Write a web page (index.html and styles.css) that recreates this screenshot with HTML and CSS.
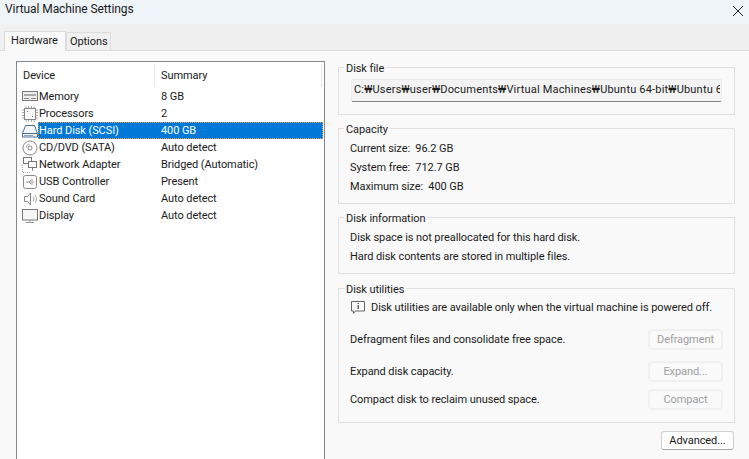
FILE: index.html
```html
<!DOCTYPE html>
<html lang="en">
<head>
<meta charset="utf-8">
<title>Virtual Machine Settings</title>
<link rel="stylesheet" href="styles.css">
</head>
<body>
<div class="window">
  <header class="titlebar">
    <span class="title">Virtual Machine Settings</span>
    <svg class="close" width="12" height="12" viewBox="0 0 12 12"><path d="M1 1l10 10M11 1L1 11" stroke="#222" fill="none"/></svg>
  </header>
  <nav class="tabs">
    <span class="tab active">Hardware</span>
    <span class="tab">Options</span>
  </nav>
  <main class="panel">
    <section class="list">
      <div class="row head"><span class="c1 headcell">Device</span><span class="c2 headcell">Summary</span></div>
      <div class="row"><svg class="ico" width="16" height="16" viewBox="0 0 16 16"><rect x="0.5" y="2.5" width="15" height="9" fill="#eee" stroke="#777"/><path d="M2 5h12v2H2z" fill="#aaa"/><path d="M2 9h5v1H2zM9 9h5v1H9z" fill="#888"/></svg><span class="c1n">Memory</span><span class="c2">8 GB</span></div>
      <div class="row"><svg class="ico" width="16" height="16" viewBox="0 0 16 16"><g fill="none" stroke="#888"><rect x="2.5" y="2.5" width="11" height="11" fill="#fafafa"/><path d="M4 0v2M6.500 0v2M9.500 0v2M12 0v2M4 14v2M6.500 14v2M9.500 14v2M12 14v2M0 4h2M0 6.500h2M0 9.500h2M0 12h2M14 4h2M14 6.500h2M14 9.500h2M14 12h2" stroke="#aaa"/></g><path d="M5 5h1v1H5zM10 10h1v1h-1z" fill="#777"/></svg><span class="c1n">Processors</span><span class="c2">2</span></div>
      <div class="row selected-row"><svg class="ico" width="16" height="16" viewBox="0 0 16 16"><g fill="none" stroke="#4a6f96"><path d="M3.500 2.500h9l3 8v3.500H.5v-3.500z" fill="#f4f8fc"/><path d="M.5 10.500h15"/></g><path d="M2 12h9v1H2z" fill="#8aa4c0"/></svg><span class="selected"><span class="c1s">Hard Disk (SCSI)</span><span class="c2">400 GB</span></span></div>
      <div class="row"><svg class="ico" width="16" height="16" viewBox="0 0 16 16"><g fill="none" stroke="#888"><circle cx="8" cy="8" r="7"/><circle cx="8" cy="8" r="2"/><path d="M4 8a4 4 0 0 1 4-4" stroke="#bbb"/></g></svg><span class="c1n">CD/DVD (SATA)</span><span class="c2">Auto detect</span></div>
      <div class="row"><svg class="ico" width="16" height="16" viewBox="0 0 16 16"><g fill="none" stroke="#777"><rect x="1.500" y="0.500" width="8" height="6"/><rect x="6.500" y="4.500" width="8" height="6" fill="#fff"/><path d="M10.500 10.500v3"/><path d="M.5 8v7.500h8" stroke="#aaa" stroke-dasharray="1 1"/></g></svg><span class="c1n">Network Adapter</span><span class="c2">Bridged (Automatic)</span></div>
      <div class="row"><svg class="ico" width="16" height="16" viewBox="0 0 16 16"><g fill="none" stroke="#888"><rect x="1.500" y="1.500" width="13" height="13" rx="2"/><path d="M4 8h8M9 6h2M7 8l2-2M7 8l2 2h2" stroke="#999"/></g></svg><span class="c1n">USB Controller</span><span class="c2">Present</span></div>
      <div class="row"><svg class="ico" width="16" height="16" viewBox="0 0 16 16"><g fill="none" stroke="#888"><path d="M2.500 5.500h3l3-3.500v12l-3-3.500h-3z"/><path d="M11 5.500a4 4 0 0 1 0 5M13 4a6 6 0 0 1 0 8" stroke="#aaa"/></g></svg><span class="c1n">Sound Card</span><span class="c2">Auto detect</span></div>
      <div class="row"><svg class="ico" width="16" height="16" viewBox="0 0 16 16"><g fill="none" stroke="#777"><rect x="0.500" y="1.500" width="15" height="10.500" fill="#f6f6f6"/><path d="M8 12v2M4 14.500h8" stroke="#999"/></g></svg><span class="c1n">Display</span><span class="c2">Auto detect</span></div>
    </section>
    <section class="side">
      <fieldset class="group g-file">
        <legend>Disk file</legend>
        <div class="path"><span class="path-text">C:₩Users₩user₩Documents₩Virtual Machines₩Ubuntu 64-bit₩Ubuntu 64-bit.vmdk</span></div>
      </fieldset>
      <fieldset class="group g-cap">
        <legend>Capacity</legend>
        <p class="line">Current size:&nbsp; 96.2 GB</p>
        <p class="line">System free:&nbsp; 712.7 GB</p>
        <p class="line">Maximum size:&nbsp; 400 GB</p>
      </fieldset>
      <fieldset class="group g-info">
        <legend>Disk information</legend>
        <p class="line">Disk space is not preallocated for this hard disk.</p>
        <p class="line">Hard disk contents are stored in multiple files.</p>
      </fieldset>
      <fieldset class="group g-util">
        <legend>Disk utilities</legend>
        <div class="notice"><svg class="notice-ico" width="15" height="15" viewBox="0 0 15 15"><path d="M.5 1.500h13v9.500H4.500l-2 2.500v-2.500h-2z" fill="none" stroke="#666"/><path d="M6.500 3h1.500v1H6.500zM6.500 5h1.500v4H6.500z" fill="#666"/></svg><span class="notice-text">Disk utilities are available only when the virtual machine is powered off.</span></div>
        <div class="action"><span>Defragment files and consolidate free space.</span><button class="btn" disabled>Defragment</button></div>
        <div class="action a2"><span>Expand disk capacity.</span><button class="btn" disabled>Expand...</button></div>
        <div class="action a3"><span>Compact disk to reclaim unused space.</span><button class="btn" disabled>Compact</button></div>
      </fieldset>
      <div class="foot"><button class="btn adv">Advanced...</button></div>
    </section>
  </main>
</div>
</body>
</html>
```
FILE: styles.css
```css
* { box-sizing: border-box; }
html, body { margin: 0; padding: 0; height: 100%; overflow: hidden; }
body { font-family: Roboto, "Noto Sans", "Noto Sans CJK KR", sans-serif; font-size: 11px; letter-spacing: -0.08px; color: #1a1a1a; background: #f0f0f0; }
.window { width: 749px; height: 459px; display: flex; flex-direction: column; overflow: hidden; }
.titlebar { height: 24px; background: #eff4f9; display: flex; align-items: center; justify-content: space-between; padding: 0 5px 6px 5px; flex: none; font-size: 12px; }
.close { margin-top: 3px; }
.tabs { height: 26px; display: flex; align-items: flex-end; padding-left: 4px; flex: none; position: relative; z-index: 1; background: #f0f0f0; }
.tab { height: 18px; width: 45px; padding: 0 0 0 3px; border: 1px solid #dcdcdc; border-bottom: 0; background: #f0f0f0; line-height: 18px; }
.tab.active { height: 20px; width: 62px; margin: 0 0 -1px 0; padding: 0 6px; background: #f9f9f9; line-height: 18px; }
.panel { flex: 1; background: #f9f9f9; border-top: 1px solid #dcdcdc; display: flex; padding: 10px 0 0 16px; min-height: 0; }
.list { width: 309px; height: 420px; flex: none; background: #fff; border: 1px solid #828790; }
.row { height: 17px; display: flex; align-items: center; }
.row.head { height: 26px; padding-top: 2px; padding-bottom: 1px; }
.headcell { height: 23px; line-height: 23px; }
.c1 { width: 138px; padding-left: 6px; border-right: 1px solid #e6e6e6; }
.head .c2 { padding-left: 6px; flex: 1; border-right: 1px solid #e6e6e6; margin-right: 2px; }
.ico { flex: none; margin-left: 5px; }
.c1n { width: 117px; flex: none; padding-left: 1px; }
.row > .c2, .selected .c2 { flex: 1; padding-left: 6px; }
.selected { flex: none; width: 285px; height: 17px; display: flex; align-items: center; background: #0078d7; color: #fff; outline: 1px dotted #e8a050; outline-offset: -1px; }
.c1s { width: 117px; flex: none; padding-left: 1px; }
.side { width: 397px; margin-left: 13px; flex: none; }
.group { margin: 0; padding: 0 7px; border: 1px solid #dfdfdf; background: transparent; min-width: 0; display: block; }
.group legend { padding: 0 2px; margin-left: -2px; height: 15px; line-height: 17px; }
.g-file { height: 55px; margin-top: -1px; }
.g-cap { height: 83px; margin-top: 6px; padding-top: 3px; }
.g-info { height: 64px; margin-top: 6px; padding-top: 3px; }
.g-util { height: 142px; margin-top: 7px; }
.path { height: 23px; width: 371px; margin: 4px 0 0 5px; background: #f3f3f3; border: 1px solid #ececec; border-bottom: 1px solid #868686; border-radius: 2px; padding: 0 0 0 2px; overflow: hidden; white-space: nowrap; line-height: 20px; letter-spacing: 0.19px; }
.path-text { display: block; width: 366px; overflow: hidden; }
.line { margin: 0; height: 19px; line-height: 19px; padding-left: 4px; }
.notice { height: 19px; display: flex; align-items: center; gap: 5px; padding-left: 5px; margin-top: 2px; }
.notice-ico { flex: none; }
.notice-text { white-space: nowrap; }
.action { height: 22px; display: flex; align-items: center; justify-content: space-between; padding: 0 5px 0 4px; margin-top: 11px; }
.action.a2 { margin-top: 10px; }
.action.a3 { margin-top: 6px; }
.btn { width: 73px; height: 19px; padding: 0; font: inherit; letter-spacing: inherit; background: #f9f9f9; border: 1px solid #eeeeee; border-radius: 3px; color: #a0a0a0; outline: 1px solid #f1f1f1; }
.foot { display: flex; justify-content: flex-end; padding: 8px 1px 0 0; }
.btn.adv { color: #1a1a1a; background: #fefefe; border: 1px solid #d0d0d0; border-bottom-color: #a8a8a8; outline: none; }
```
